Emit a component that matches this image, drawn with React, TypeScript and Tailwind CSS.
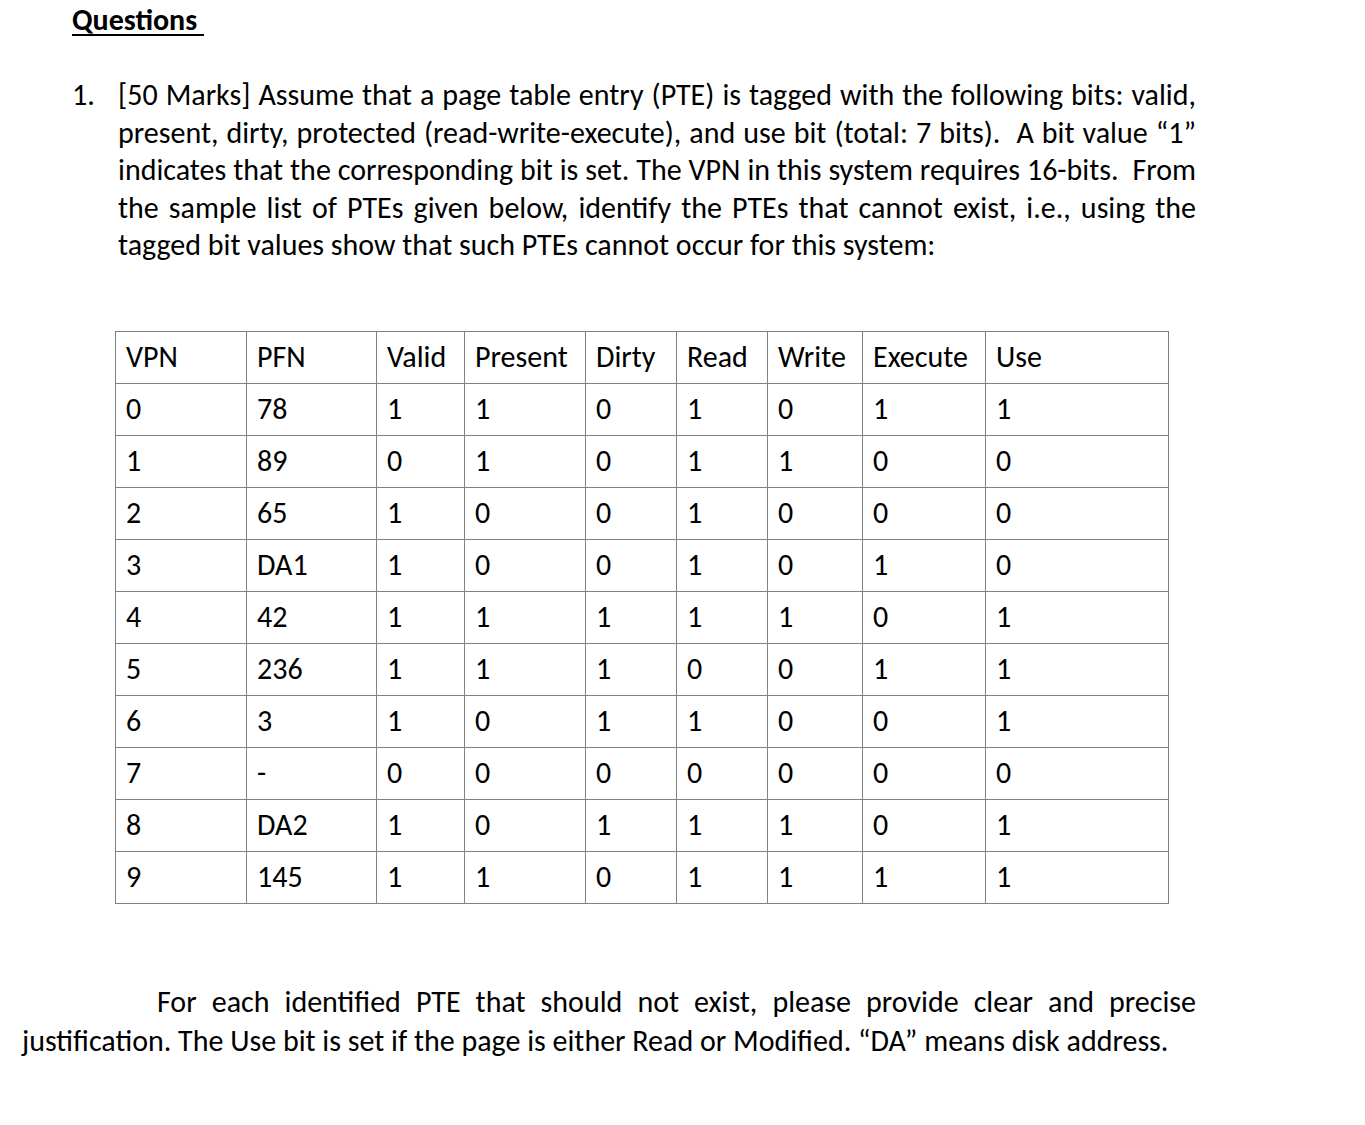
const font = { fontFamily: 'Carlito, Lato, "Liberation Sans", sans-serif' };

const header = ['VPN', 'PFN', 'Valid', 'Present', 'Dirty', 'Read', 'Write', 'Execute', 'Use'];
const widths = [131, 130, 88, 121, 91, 91, 95, 123, 183];

const rows: string[][] = [
  ['0', '78', '1', '1', '0', '1', '0', '1', '1'],
  ['1', '89', '0', '1', '0', '1', '1', '0', '0'],
  ['2', '65', '1', '0', '0', '1', '0', '0', '0'],
  ['3', 'DA1', '1', '0', '0', '1', '0', '1', '0'],
  ['4', '42', '1', '1', '1', '1', '1', '0', '1'],
  ['5', '236', '1', '1', '1', '0', '0', '1', '1'],
  ['6', '3', '1', '0', '1', '1', '0', '0', '1'],
  ['7', '-', '0', '0', '0', '0', '0', '0', '0'],
  ['8', 'DA2', '1', '0', '1', '1', '1', '0', '1'],
  ['9', '145', '1', '1', '0', '1', '1', '1', '1'],
];

function JLine({ children }: { children: string }) {
  return <div className="whitespace-pre text-justify [text-align-last:justify]">{children}</div>;
}

export default function App() {
  return (
    <div className="min-h-[1125px] w-[1365px] bg-white text-[30px] text-black" style={font}>
      <div className="pl-[72px] pt-[2px] leading-[36px]">
        <span className="font-bold underline decoration-[2px] underline-offset-[4px]">Questions&nbsp;</span>
      </div>

      <div className="mt-[38px] flex pl-[72px] leading-[37.5px]">
        <div className="w-[46px] shrink-0">1.</div>
        <div className="w-[1078px]">
          <JLine>[50 Marks] Assume that a page table entry (PTE) is tagged with the following bits: valid,</JLine>
          <JLine>present, dirty, protected (read-write-execute), and use bit (total: 7 bits).  A bit value “1”</JLine>
          <JLine>indicates that the corresponding bit is set. The VPN in this system requires 16-bits.  From</JLine>
          <JLine>the sample list of PTEs given below, identify the PTEs that cannot exist, i.e., using the</JLine>
          <div className="whitespace-pre">tagged bit values show that such PTEs cannot occur for this system:</div>
        </div>
      </div>

      <div className="mt-[67px] pl-[115px]">
        <table className="table-fixed border-collapse">
          <colgroup>
            {widths.map((w, i) => (
              <col key={i} style={{ width: w }} />
            ))}
          </colgroup>
          <tbody>
            <tr className="h-[52px]">
              {header.map((h) => (
                <td key={h} className="border border-[#808080] pl-[10px] align-middle leading-none">
                  {h}
                </td>
              ))}
            </tr>
            {rows.map((r, ri) => (
              <tr key={ri} className="h-[52px]">
                {r.map((c, ci) => (
                  <td key={ci} className="border border-[#808080] pl-[10px] align-middle leading-none">
                    {c}
                  </td>
                ))}
              </tr>
            ))}
          </tbody>
        </table>
      </div>

      <div className="mt-[78px] w-[1196px] pl-[22px] leading-[39px]">
        <div className="whitespace-pre pl-[135px] text-justify [text-align-last:justify]">
          For each identified PTE that should not exist, please provide clear and precise
        </div>
        <div className="whitespace-pre">
          justification. The Use bit is set if the page is either Read or Modified. “DA” means disk address.
        </div>
      </div>
    </div>
  );
}
